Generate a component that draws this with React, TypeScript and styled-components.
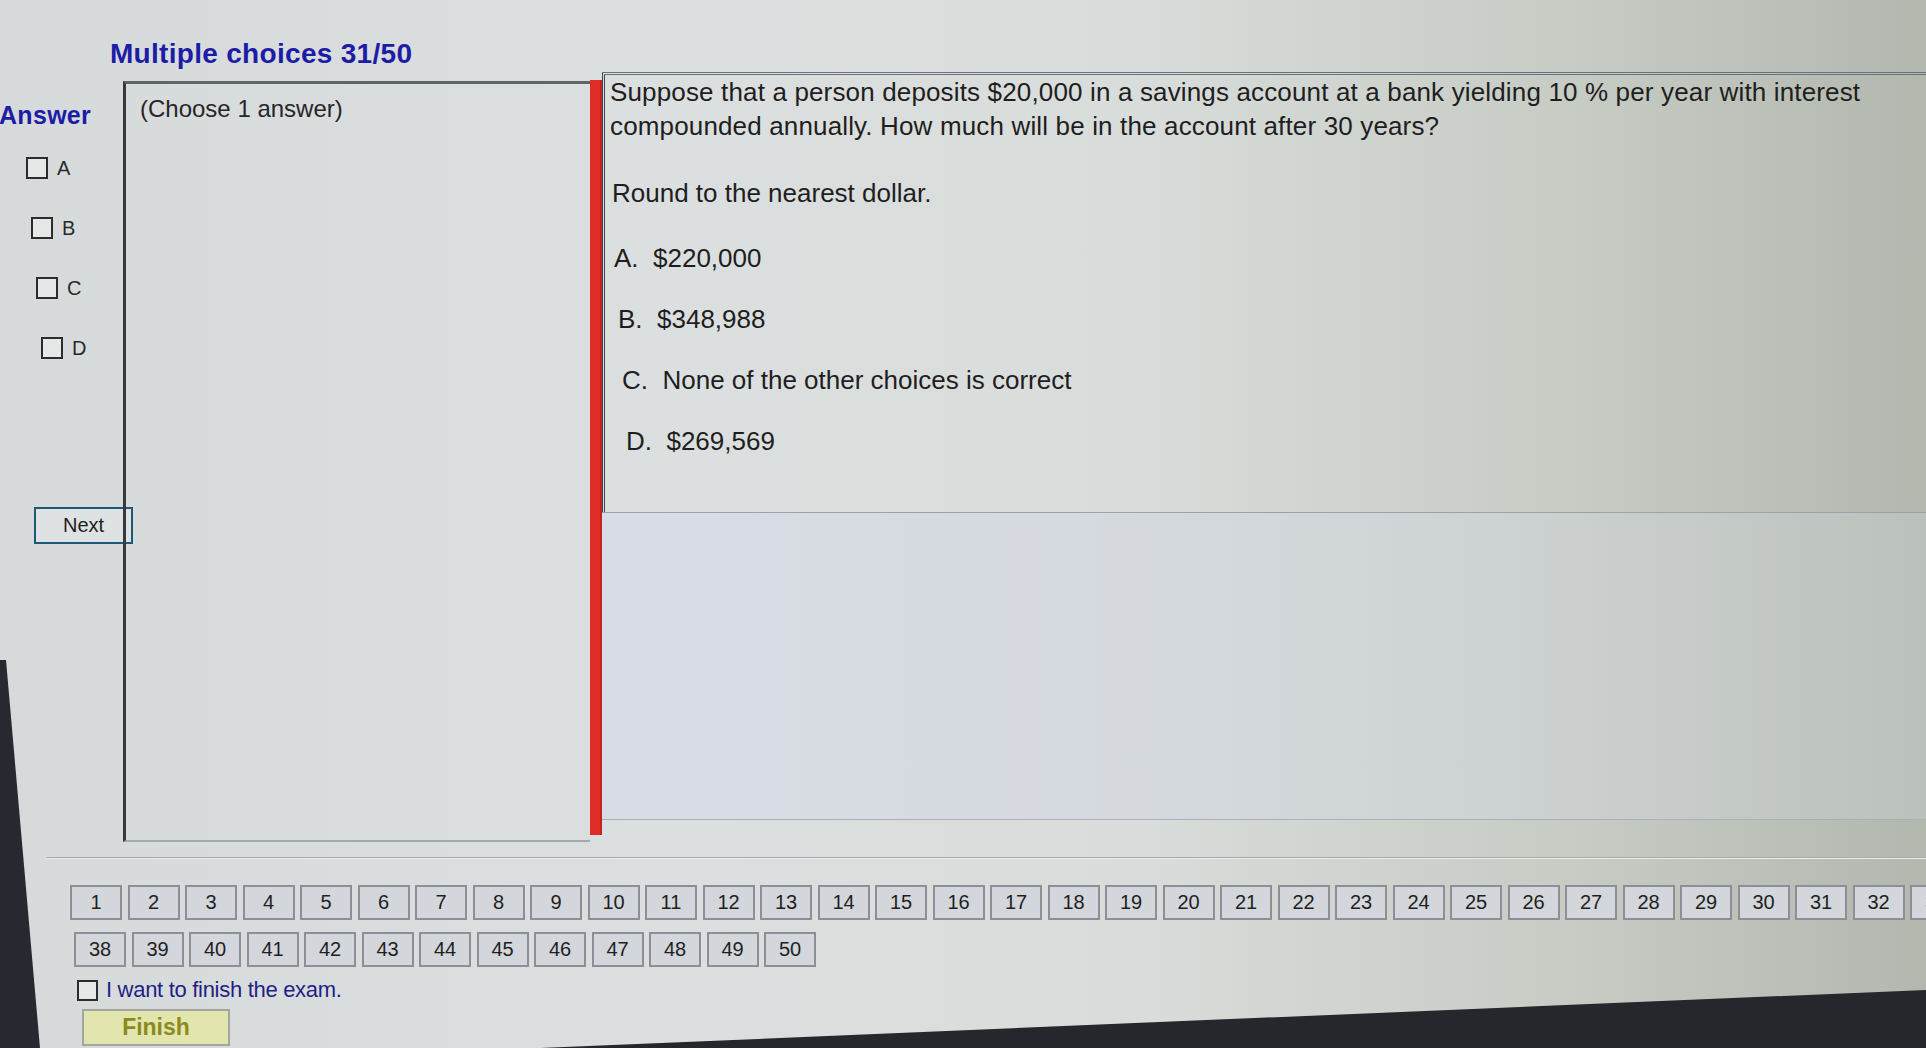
import React from "react";
import styled, { createGlobalStyle } from "styled-components";

const GlobalStyle = createGlobalStyle`
  html, body {
    margin: 0;
    padding: 0;
    overflow: hidden;
  }
  body {
    font-family: "Liberation Sans", Arial, sans-serif;
  }
  * { box-sizing: border-box; }
`;

const Screen = styled.div`
  position: relative;
  width: 100vw;
  height: 100vh;
  overflow: hidden;
  display: flex;
  flex-direction: column;
  background: linear-gradient(
    90deg,
    #d7dadb 0%,
    #dcdfdf 35%,
    #d8dcda 60%,
    #c6cbc4 82%,
    #b2b8ae 100%
  );
  color: #1c1c1c;
`;

const Header = styled.header`
  height: 72px;
  padding: 38px 0 0 110px;
`;

const Title = styled.h1`
  margin: 0;
  font-size: 28px;
  line-height: 32px;
  font-weight: 700;
  color: #1d1ca6;
  letter-spacing: 0.3px;
`;

const MainFrame = styled.div`
  display: flex;
  align-items: flex-start;
  height: 785px;
`;

const AnswerColumn = styled.aside`
  width: 123px;
  flex: none;
  padding-top: 28px;
  display: flex;
  flex-direction: column;
`;

const AnswerHeading = styled.div`
  font-size: 25px;
  line-height: 30px;
  font-weight: 700;
  color: #1d1ca6;
  margin-left: -1px;
  letter-spacing: 0.3px;
`;

const OptionList = styled.div`
  display: flex;
  flex-direction: column;
  gap: 34px;
  margin-top: 25px;
  padding-left: 26px;
`;

const OptionRow = styled.label<{ $shift: number }>`
  display: flex;
  align-items: center;
  gap: 9px;
  height: 26px;
  margin-left: ${(p) => p.$shift}px;
  font-size: 20px;
  color: #2a2a2a;
`;

const CheckBox = styled.span<{ $size?: number }>`
  display: inline-block;
  width: ${(p) => p.$size ?? 22}px;
  height: ${(p) => p.$size ?? 22}px;
  border: 2px solid #2c2c2e;
  background: #e6e8e8;
  flex: none;
`;

const NextButton = styled.button`
  margin: 146px 0 0 34px;
  width: 99px;
  height: 37px;
  border: 2px solid #1f5876;
  background: #dfe2e3;
  font-family: inherit;
  font-size: 20px;
  color: #1e1e1e;
  padding: 0;
`;

const ChoosePanel = styled.section`
  width: 467px;
  height: 761px;
  flex: none;
  margin-top: 9px;
  border-top: 3px solid #60656b;
  border-left: 3px solid #37393d;
  border-bottom: 2px solid #a4a9ad;
  padding: 10px 0 0 14px;
`;

const ChooseHint = styled.div`
  font-size: 24px;
  line-height: 30px;
  color: #262626;
`;

const RedBar = styled.div`
  width: 12px;
  height: 755px;
  flex: none;
  margin-top: 8px;
  background: #de2e27;
  box-shadow: inset -2px 0 0 #c22420;
`;

const QuestionPanel = styled.section`
  flex: 1;
  display: flex;
  flex-direction: column;
  min-width: 0;
`;

const QuestionBody = styled.div`
  height: 440px;
  border-top: 3px double #6b717b;
  border-left: 3px double #3f444c;
  padding: 0 0 0 5px;
  font-size: 26px;
  line-height: 34px;
  color: #1e1e1e;
  white-space: nowrap;
`;

const QuestionText = styled.p`
  margin: 0;
  letter-spacing: 0.15px;
`;

const Instruction = styled.p`
  margin: 33px 0 0 2px;
`;

const ChoiceList = styled.div`
  display: flex;
  flex-direction: column;
  gap: 27px;
  margin-top: 31px;
`;

const ChoiceLine = styled.div<{ $shift: number }>`
  margin-left: ${(p) => p.$shift}px;
  white-space: pre;
`;

const LowerPane = styled.div`
  height: 308px;
  border-top: 1px solid #9ca2ab;
  border-bottom: 1px solid #aab0b5;
  background: linear-gradient(90deg, rgba(216, 220, 230, 0.9), rgba(200, 205, 205, 0.4));
`;

const FrameRule = styled.div`
  margin-left: 47px;
  height: 2px;
  border-top: 1px solid #a5a9ac;
  border-bottom: 1px solid #eceeee;
`;

const NavRow = styled.nav<{ $indent: number; $top: number }>`
  display: flex;
  gap: 5.5px;
  margin-top: ${(p) => p.$top}px;
  padding-left: ${(p) => p.$indent}px;
  white-space: nowrap;
`;

const NavButton = styled.button`
  flex: none;
  width: 52px;
  height: 35px;
  padding: 0;
  border: 2px solid #8c9096;
  background: #d3d6db;
  font-family: inherit;
  font-size: 20px;
  color: #1f1f1f;
`;

const FinishCheckRow = styled.label`
  display: flex;
  align-items: center;
  gap: 8px;
  margin: 10px 0 0 77px;
  height: 26px;
  font-size: 22px;
  color: #1f1f86;
  letter-spacing: -0.3px;
`;

const FinishButton = styled.button`
  margin: 6px 0 0 82px;
  width: 148px;
  height: 37px;
  padding: 0;
  border: 2px solid #a3a59f;
  background: #e3e5ae;
  font-family: inherit;
  font-size: 23px;
  font-weight: 700;
  color: #8b8a1c;
`;

const Bezel = styled.svg`
  position: absolute;
  left: 0;
  top: 0;
  width: 100%;
  height: 100%;
  pointer-events: none;
`;

const options = [
  { letter: "A", shift: 0 },
  { letter: "B", shift: 5 },
  { letter: "C", shift: 10 },
  { letter: "D", shift: 15 },
];

const choices = [
  { text: "A.  $220,000", shift: 4 },
  { text: "B.  $348,988", shift: 8 },
  { text: "C.  None of the other choices is correct", shift: 12 },
  { text: "D.  $269,569", shift: 16 },
];

const firstRow = Array.from({ length: 33 }, (_, i) => i + 1);
const secondRow = Array.from({ length: 13 }, (_, i) => i + 38);

export default function App() {
  return (
    <>
      <GlobalStyle />
      <Screen>
        <Header>
          <Title>Multiple choices 31/50</Title>
        </Header>

        <MainFrame>
          <AnswerColumn>
            <AnswerHeading>Answer</AnswerHeading>
            <OptionList>
              {options.map((o) => (
                <OptionRow key={o.letter} $shift={o.shift}>
                  <CheckBox />
                  {o.letter}
                </OptionRow>
              ))}
            </OptionList>
            <NextButton>Next</NextButton>
          </AnswerColumn>

          <ChoosePanel>
            <ChooseHint>(Choose 1 answer)</ChooseHint>
          </ChoosePanel>

          <RedBar />

          <QuestionPanel>
            <QuestionBody>
              <QuestionText>
                Suppose that a person deposits $20,000 in a savings account at a bank yielding 10 % per year with interest
                <br />
                compounded annually. How much will be in the account after 30 years?
              </QuestionText>
              <Instruction>Round to the nearest dollar.</Instruction>
              <ChoiceList>
                {choices.map((c) => (
                  <ChoiceLine key={c.text} $shift={c.shift}>
                    {c.text}
                  </ChoiceLine>
                ))}
              </ChoiceList>
            </QuestionBody>
            <LowerPane />
          </QuestionPanel>
        </MainFrame>

        <FrameRule />

        <NavRow $indent={70} $top={26}>
          {firstRow.map((n) => (
            <NavButton key={n}>{n}</NavButton>
          ))}
        </NavRow>
        <NavRow $indent={74} $top={12}>
          {secondRow.map((n) => (
            <NavButton key={n}>{n}</NavButton>
          ))}
        </NavRow>

        <FinishCheckRow>
          <CheckBox $size={21} />
          I want to finish the exam.
        </FinishCheckRow>
        <FinishButton>Finish</FinishButton>

        <Bezel viewBox="0 0 1926 1048" preserveAspectRatio="none" aria-hidden="true">
          <polygon points="540,1048 1926,990 1926,1048" fill="#24282d" />
          <polygon points="0,660 6,660 40,1048 0,1048" fill="#262a30" />
        </Bezel>
      </Screen>
    </>
  );
}
